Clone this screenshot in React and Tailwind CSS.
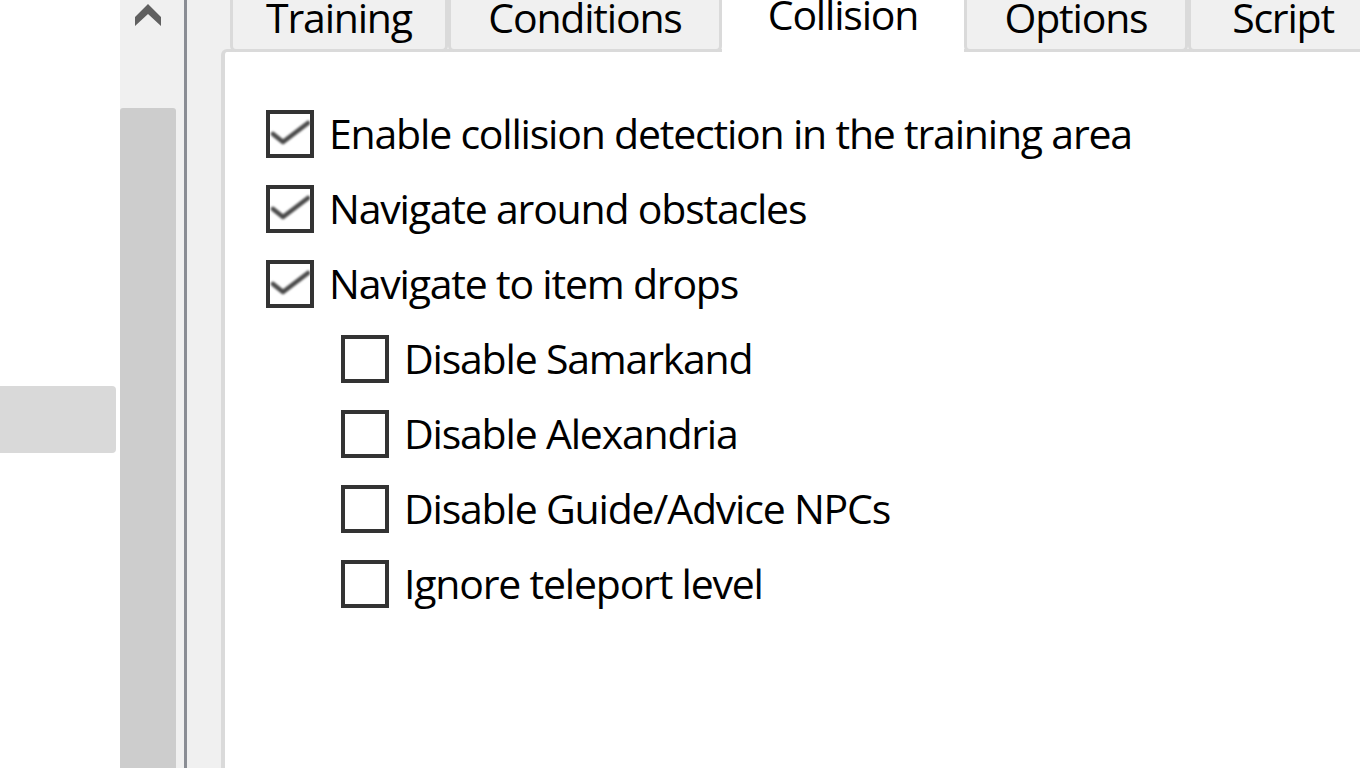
import React from 'react';

// Tab strip of the collision settings page (zoomed Windows dialog)
const tabs = [
  { label: 'Training', width: 'w-[218px]' },
  { label: 'Conditions', width: 'w-[274px]' },
  { label: 'Collision', width: 'w-[242px]', active: true },
  { label: 'Options', width: 'w-[224px]' },
  { label: 'Script', width: 'w-[190px]' },
];

const options = [
  { label: 'Enable collision detection in the training area', checked: true },
  { label: 'Navigate around obstacles', checked: true },
  { label: 'Navigate to item drops', checked: true },
  { label: 'Disable Samarkand', sub: true },
  { label: 'Disable Alexandria', sub: true },
  { label: 'Disable Guide/Advice NPCs', sub: true },
  { label: 'Ignore teleport level', sub: true },
];

const CheckBox = ({ checked }) => (
  <div className="w-[48px] h-[48px] shrink-0 border-[4px] border-[#333333] bg-white">
    {checked && (
      <svg width="40" height="40" viewBox="0 0 40 40" className="blur-[0.8px]">
        <polyline
          points="3,20 13,28 38,9"
          fill="none"
          stroke="#4a4a4a"
          strokeWidth="4.5"
          strokeLinejoin="round"
          strokeLinecap="round"
        />
      </svg>
    )}
  </div>
);

const Tab = ({ label, width, active }) => {
  if (active) {
    return (
      <div className={`${width} h-[52px] shrink-0 bg-white flex justify-center overflow-hidden`}>
        <span className="-mt-[7px] leading-[42px] whitespace-nowrap">{label}</span>
      </div>
    );
  }
  return (
    <div
      className={`${width} h-[52px] shrink-0 bg-[#f0f0f0] border-x-[3px] border-b-[3px] border-[#dadada] rounded-b-[6px] flex justify-center overflow-hidden`}
    >
      <span className="-mt-[4px] leading-[42px] whitespace-nowrap">{label}</span>
    </div>
  );
};

export default function App() {
  return (
    <div
      className="w-[1360px] h-[768px] flex overflow-hidden bg-white text-black text-[41px] tracking-[-1.2px]"
      style={{ fontFamily: '"Open Sans", "Noto Sans", sans-serif' }}
    >
      {/* lista lateral */}
      <div className="w-[120px] shrink-0 bg-white pt-[386px]">
        <div className="w-[116px] h-[67px] bg-[#d9d9d9] rounded-r-[4px]" />
      </div>

      {/* barra de desplazamiento */}
      <div className="w-[56px] shrink-0 bg-[#f0f0f0] flex flex-col">
        <div className="h-[108px] flex justify-center pt-[4px]">
          <svg width="26" height="22" viewBox="0 0 26 22">
            <path d="M13 0 L26 13 L26 22 L13 10 L0 22 L0 13 Z" fill="#606060" />
          </svg>
        </div>
        <div className="flex-1 bg-[#cdcdcd] rounded-t-[3px]" />
      </div>

      {/* separador */}
      <div className="w-[8px] shrink-0 bg-[#f0f0f0]" />
      <div className="w-[3px] shrink-0 bg-[#8a8d94]" />
      <div className="w-[34px] shrink-0 bg-[#f0f0f0]" />

      {/* control de pestañas */}
      <div className="flex-1 min-w-0 bg-[#f0f0f0] flex flex-col">
        <div className="relative z-10 flex pl-[9px] -mb-[3px] h-[52px] overflow-hidden">
          {tabs.map((t) => (
            <Tab key={t.label} {...t} />
          ))}
        </div>
        <div className="flex-1 bg-white border-l-[4px] border-t-[3px] border-[#dadada] rounded-tl-[6px] pl-[41px] pt-[58px]">
          <div className="flex flex-col gap-[27px]">
            {options.map((o) => (
              <div
                key={o.label}
                className={`flex items-center gap-[15px] h-[48px] ${o.sub ? 'ml-[75px]' : ''}`}
              >
                <CheckBox checked={o.checked} />
                <span className="whitespace-nowrap leading-normal">{o.label}</span>
              </div>
            ))}
          </div>
        </div>
      </div>
    </div>
  );
}
